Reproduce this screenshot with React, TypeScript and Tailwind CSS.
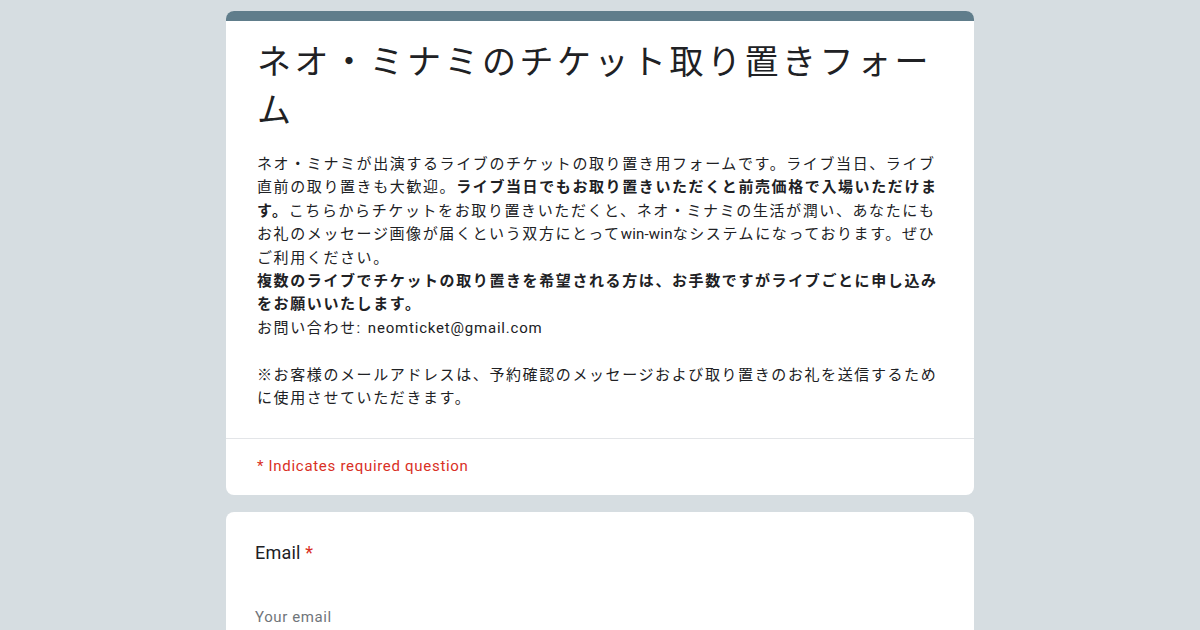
import React from "react";

const jp = "font-['Roboto','Noto_Sans_CJK_JP',sans-serif]";

export default function App() {
  return (
    <div className={`min-h-[630px] w-full bg-[#d6dde1] ${jp} text-[#202124]`}>
      <div className="mx-auto w-[748px] pt-[11px]">
        {/* Header card */}
        <div className="overflow-hidden rounded-lg bg-white">
          <div className="h-[10px] bg-[#607d8b]" />
          <div className="px-[31px] pt-[17px] pb-[28px]">
            <h1 className="text-[34px] leading-[48px] tracking-[3.5px] font-normal">
              ネオ・ミナミのチケット取り置きフォーム
            </h1>
            <div className="mt-[19px] text-[15px] leading-[23.4px] tracking-[1.6px]">
              <p>
                ネオ・ミナミが出演するライブのチケットの取り置き用フォームです。ライブ当日、ライブ直前の取り置きも大歓迎。
                <b className="font-bold">ライブ当日でもお取り置きいただくと前売価格で入場いただけます。</b>
                こちらからチケットをお取り置きいただくと、ネオ・ミナミの生活が潤い、あなたにもお礼のメッセージ画像が届くという双方にとって
                <span className="tracking-[0.2px]">win-win</span>
                なシステムになっております。ぜひご利用ください。
              </p>
              <p className="font-bold">
                複数のライブでチケットの取り置きを希望される方は、お手数ですがライブごとに申し込みをお願いいたします。
              </p>
              <p>
                お問い合わせ:
                <span className="ml-[6px] tracking-[0.8px]">neomticket@gmail.com</span>
              </p>
              <p>&nbsp;</p>
              <p>
                ※お客様のメールアドレスは、予約確認のメッセージおよび取り置きのお礼を送信するために使用させていただきます。
              </p>
            </div>
          </div>
          <div className="h-px bg-[#e3e5e8]" />
          <div className="px-[31px] pt-[17px] pb-[19px] text-[15px] leading-[20px] tracking-[0.7px] text-[#d93025]">
            * Indicates required question
          </div>
        </div>

        {/* Email card */}
        <div className="mt-[17px] h-[200px] rounded-lg bg-white px-[29px] pt-[30px]">
          <div className="text-[18px] leading-[22px] tracking-[0.2px]">
            Email <span className="text-[#d93025]">*</span>
          </div>
          <div className="mt-[43px] text-[15px] leading-[20px] tracking-[0.6px] text-[#70757a]">
            Your email
          </div>
        </div>
      </div>
    </div>
  );
}
